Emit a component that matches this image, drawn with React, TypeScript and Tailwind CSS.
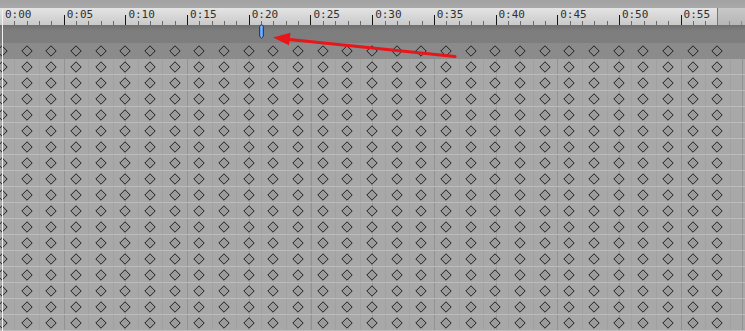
import React from "react";

const labels = ["0:00","0:05","0:10","0:15","0:20","0:25","0:30","0:35","0:40","0:45","0:50","0:55"];
const cols = Array.from({ length: 30 });
const bodyRows = Array.from({ length: 17 });

function Diamond({ fill }: { fill: string }) {
  return (
    <div className="flex w-[24.68px] shrink-0 items-center justify-center">
      <svg width="12" height="12" viewBox="0 0 12 12" className="block">
        <path d="M6 0.8 L11.2 6 L6 11.2 L0.8 6 Z" fill={fill} stroke="#202020" strokeWidth="1" />
      </svg>
    </div>
  );
}

function DiamondRow({ fill }: { fill: string }) {
  return (
    <div className="-ml-[10.34px] flex h-full items-center">
      {cols.map((_, i) => (
        <Diamond key={i} fill={fill} />
      ))}
    </div>
  );
}

export default function App() {
  return (
    <div className="relative h-[331px] w-[745px] overflow-hidden bg-[#a8a8a8] font-['DejaVu_Sans_Mono',monospace]">
      {/* top strip */}
      <div className="h-2 bg-[linear-gradient(#a2a2a2,#a9a9a9)]" />
      {/* ruler */}
      <div className="flex h-[17px]">
        <div className="w-[717px] shrink-0 overflow-hidden bg-[image:repeating-linear-gradient(90deg,#6a6a6a_0_1px,transparent_1px_12.34px),linear-gradient(#e4e4e4,#c9c9c9)] bg-[size:100%_4px,100%_100%] bg-[position:2px_bottom,0_0] bg-no-repeat">
          <div className="ml-[2px] flex h-full">
            {labels.map((l) => (
              <div key={l} className="flex h-full w-[61.7px] shrink-0">
                <div className="h-[10px] w-px self-end bg-[#151515]" />
                <span className="ml-[2px] mt-[1px] text-[11px] leading-[12px] text-[#303030]">{l}</span>
              </div>
            ))}
          </div>
        </div>
        <div className="flex-1 border-l border-[#777] bg-[image:repeating-linear-gradient(90deg,#8a8a8a_0_1px,transparent_1px_12.34px),linear-gradient(#c8c8c8,#b6b6b6)] bg-[size:100%_4px,100%_100%] bg-[position:11px_bottom,0_0] bg-no-repeat" />
      </div>
      {/* dark strip */}
      <div className="h-[18px] bg-[linear-gradient(#6f6f6f,#7d7d7d_30%,#7e7e7e)]" />
      {/* band row */}
      <div className="h-4 overflow-hidden bg-[#8b8b8b]">
        <DiamondRow fill="#8b8b8b" />
      </div>
      {/* body */}
      <div className="bg-[image:repeating-linear-gradient(90deg,#929292_0_1px,transparent_1px_61.7px),repeating-linear-gradient(90deg,#a0a0a0_0_1px,transparent_1px_12.34px)] bg-[position:2px_0,2px_0]">
        {bodyRows.map((_, r) => (
          <div key={r} className="box-border h-4 overflow-hidden border-b border-[#bcbcbc]">
            <DiamondRow fill="#9b9b9b" />
          </div>
        ))}
      </div>

      {/* zero line */}
      <div className="pointer-events-none absolute left-[2px] top-[9px] h-[322px] w-px bg-[#f2f2f2]" />

      {/* blue keyframe marker */}
      <svg className="pointer-events-none absolute left-[258px] top-[24px]" width="7" height="16" viewBox="0 0 7 16">
        <defs>
          <linearGradient id="mk" x1="0" x2="1" y1="0" y2="0">
            <stop offset="0" stopColor="#3f7fd8" />
            <stop offset="0.5" stopColor="#7fb2f5" />
            <stop offset="1" stopColor="#3a74cc" />
          </linearGradient>
        </defs>
        <path d="M1.5 2.5 Q1.5 1 3.5 1 Q5.5 1 5.5 2.5 L5.5 12 L3.5 14.5 L1.5 12 Z" fill="url(#mk)" stroke="#1e3f86" strokeWidth="1" />
      </svg>

      {/* red arrow */}
      <svg className="pointer-events-none absolute left-0 top-0" width="745" height="331" viewBox="0 0 745 331">
        <line x1="455" y1="56.5" x2="285" y2="39" stroke="#e8161a" strokeWidth="3.2" strokeLinecap="round" />
        <path d="M273 37.6 L290.5 32.8 L289 45.2 Z" fill="#e8161a" />
      </svg>
    </div>
  );
}
